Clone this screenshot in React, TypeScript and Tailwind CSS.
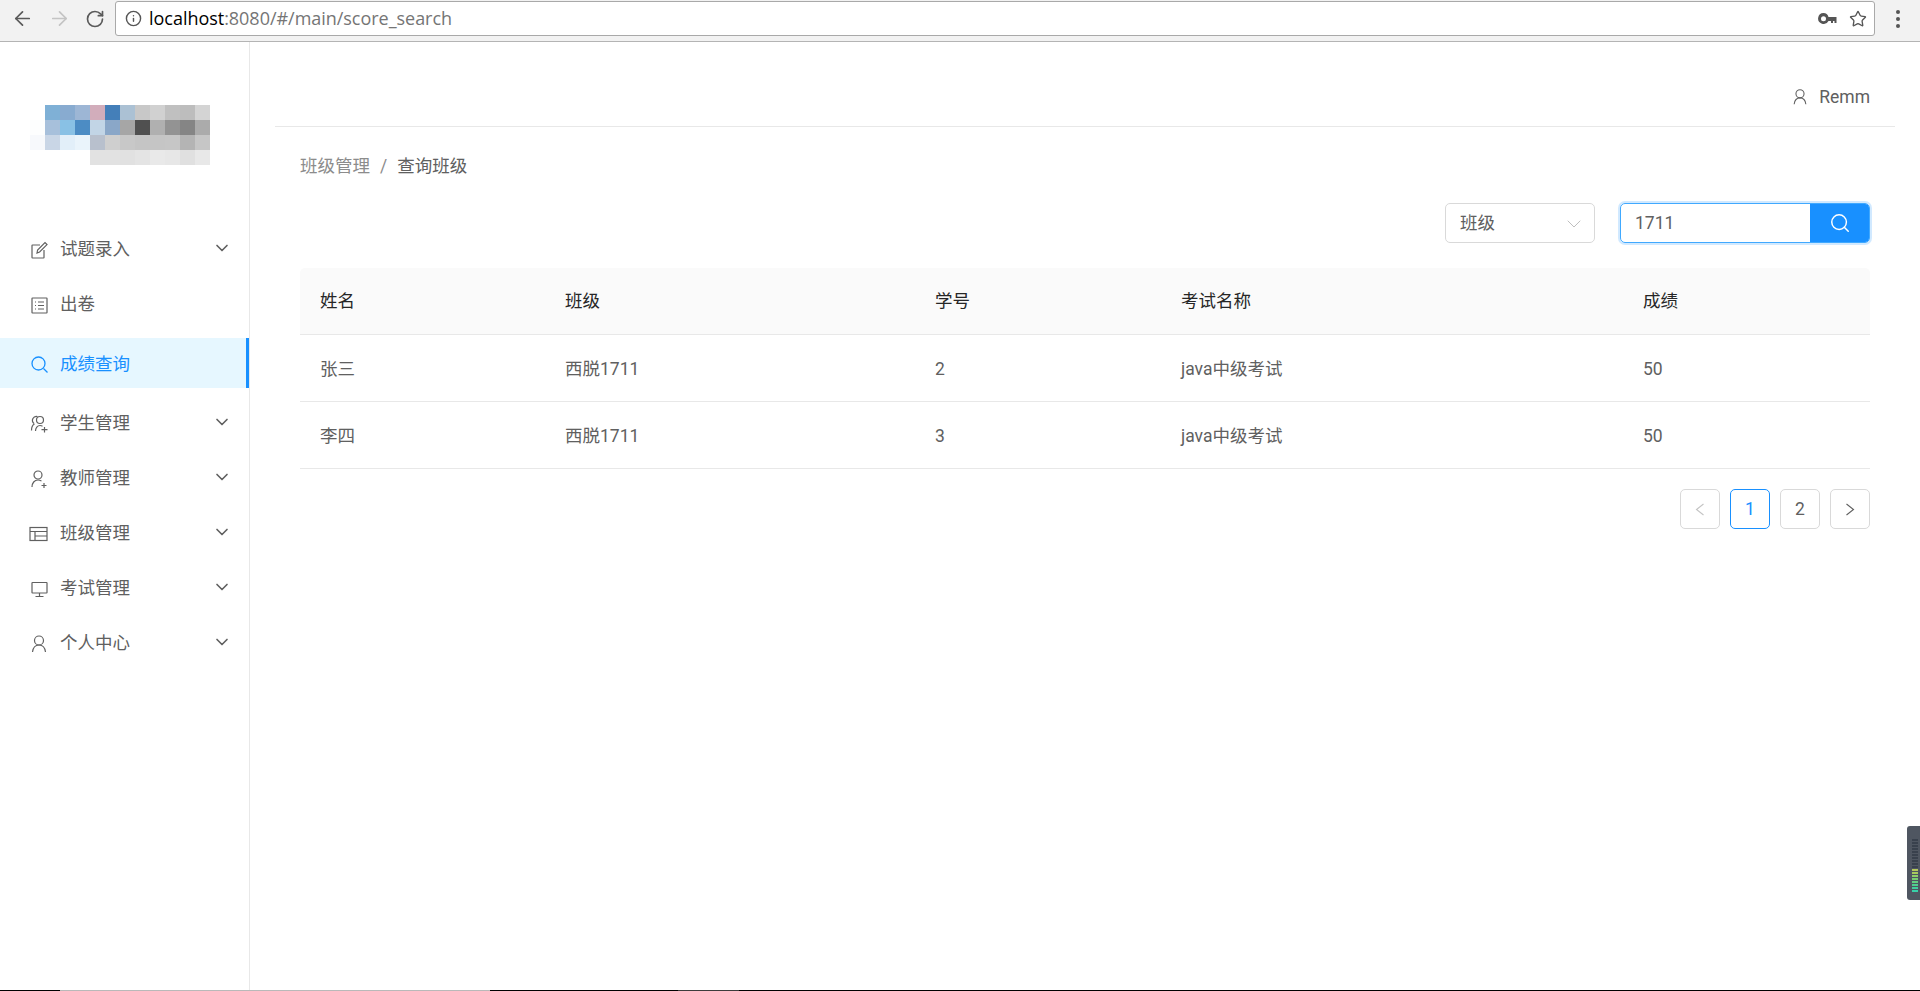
import { ArrowLeft, ArrowRight, ChevronDown, Info, RotateCw, Search, Star } from "lucide-react";
import type { ReactNode } from "react";

const font = "font-['Roboto','Noto_Sans_CJK_SC',sans-serif]";

const IconEdit = () => (
  <svg width="20" height="20" viewBox="0 0 20 20" fill="none" stroke="currentColor" strokeWidth="1.2">
    <path d="M15 10v7.500a.5.5 0 0 1-.5.5h-11a.5.5 0 0 1-.5-.5v-12a.5.5 0 0 1 .5-.5H11" />
    <path d="M8 13l.6-3L16 2.600 18 4.600 10.600 12z" />
  </svg>
);
const IconProfile = () => (
  <svg width="20" height="20" viewBox="0 0 20 20" fill="none" stroke="currentColor" strokeWidth="1.2">
    <rect x="3" y="3" width="15" height="15" rx="0.5" />
    <path d="M6 7h1M9 7h6M6 10.500h1M9 10.500h6M6 14h1M9 14h6" />
  </svg>
);
const IconSearch = () => (
  <svg width="20" height="20" viewBox="0 0 20 20" fill="none" stroke="currentColor" strokeWidth="1.3">
    <circle cx="9.500" cy="9.500" r="6.500" />
    <path d="M14.500 14.500l4 4" />
  </svg>
);
const IconTeam = () => (
  <svg width="20" height="20" viewBox="0 0 20 20" fill="none" stroke="currentColor" strokeWidth="1.2">
    <circle cx="11" cy="6" r="3.500" />
    <path d="M5 9.500A4 4 0 0 1 8.500 2.500M2.500 16.500c0-3 1-5.500 3-6.500M6.500 17c0-3 2-5.500 4.500-5.500 1 0 1.800.2 2.500.7M15.500 13v5.500M12.500 15.700h6" />
  </svg>
);
const IconUserAdd = () => (
  <svg width="20" height="20" viewBox="0 0 20 20" fill="none" stroke="currentColor" strokeWidth="1.2">
    <circle cx="9" cy="6" r="4" />
    <path d="M3 18c0-4 2.500-7 6-7 1.500 0 2.500.5 3.500 1M15 14v5M12.500 16.500h5" />
  </svg>
);
const IconTable = () => (
  <svg width="20" height="20" viewBox="0 0 20 20" fill="none" stroke="currentColor" strokeWidth="1.2">
    <rect x="1" y="3.500" width="17" height="13" />
    <path d="M1 7.500h17M6 7.500v9M6 12h12" />
  </svg>
);
const IconDesktop = () => (
  <svg width="20" height="20" viewBox="0 0 20 20" fill="none" stroke="currentColor" strokeWidth="1.2">
    <rect x="3" y="3.500" width="15" height="10.500" rx="0.5" />
    <path d="M10.500 14v3.500M6.500 17.500h8" />
  </svg>
);
const IconUser = ({ size = 20 }: { size?: number }) => (
  <svg width={size} height={size} viewBox="0 0 20 20" fill="none" stroke="currentColor" strokeWidth="1.2">
    <circle cx="10" cy="6.500" r="4.500" />
    <path d="M3.500 18c.5-4 3-7 6.500-7s6 3 6.500 7" />
  </svg>
);

const logoCells = [
  ["", "#7fb0d6", "#88abd0", "#9db6d5", "#d2adbb", "#447fb9", "#abc1d4", "#c8c8c8", "#d1d1d1", "#c0c0c0", "#bdbdbd", "#d4d4d4"],
  ["#fdfefe", "#a7c0db", "#89c1e5", "#4c8cc4", "#c2d5e6", "#8aa7c8", "#a6a6a6", "#505050", "#b0b0b0", "#939393", "#858585", "#ababab"],
  ["#f7f9fc", "#c9d6e6", "#e2eff9", "#eaf4fb", "#b8c0cd", "#cfcfcf", "#c8c8c8", "#c5c5c5", "#c5c5c5", "#c6c6c6", "#b4b4b4", "#c6c6c6"],
  ["", "", "", "", "#e2e2e2", "#e2e2e2", "#e1e1e1", "#e4e4e4", "#e9e9e9", "#e7e7e7", "#e0e0e0", "#e8e8e8"],
];

type MenuItem = { label: string; icon: ReactNode; arrow?: boolean; active?: boolean; h: string };

const menu: MenuItem[] = [
  { label: "试题录入", icon: <IconEdit />, arrow: true, h: "h-[55px]" },
  { label: "出卷", icon: <IconProfile />, h: "h-[55px]" },
  { label: "成绩查询", icon: <IconSearch />, active: true, h: "h-[50px] mt-[7px] mb-[7px]" },
  { label: "学生管理", icon: <IconTeam />, arrow: true, h: "h-[55px]" },
  { label: "教师管理", icon: <IconUserAdd />, arrow: true, h: "h-[55px]" },
  { label: "班级管理", icon: <IconTable />, arrow: true, h: "h-[55px]" },
  { label: "考试管理", icon: <IconDesktop />, arrow: true, h: "h-[55px]" },
  { label: "个人中心", icon: <IconUser />, arrow: true, h: "h-[55px]" },
];

const columns = [
  { label: "姓名", w: "w-[245px]" },
  { label: "班级", w: "w-[370px]" },
  { label: "学号", w: "w-[246px]" },
  { label: "考试名称", w: "w-[462px]" },
  { label: "成绩", w: "flex-1" },
];

const rows = [
  ["张三", "西脱1711", "2", "java中级考试", "50"],
  ["李四", "西脱1711", "3", "java中级考试", "50"],
];

const meter = [
  "#39414d", "#39414d", "#39414d", "#39414d", "#39414d", "#39414d", "#39414d", "#39414d", "#39414d", "#39414d",
  "#b5c95a", "#a8cc5e", "#8fd068", "#78d072", "#62d080", "#4fd08e", "#40d09c", "#38d0a8",
];

function BrowserBar() {
  return (
    <div className="h-[42px] shrink-0 flex items-center bg-[#f2f2f2] border-b border-[#b4b4b4] pb-[5px] pt-[1px]">
      <div className="w-[115px] flex items-center pl-[11px] gap-[14px] text-[#5a5a5a]">
        <ArrowLeft size={23} strokeWidth={1.8} />
        <ArrowRight size={23} strokeWidth={1.8} className="text-[#c4c4c4]" />
        <RotateCw size={20} strokeWidth={2} />
      </div>
      <div className="w-[1760px] h-[35px] bg-white border border-[#a9a9a9] rounded-[3px] flex items-center pl-[9px] pr-[7px]">
        <Info size={17} strokeWidth={2} className="text-[#555] mr-[7px]" />
        <span className="text-[18px] text-[#757575] font-['Open_Sans',sans-serif] tracking-[-0.03px]">
          <span className="text-black">localhost</span>:8080/#/main/score_search
        </span>
        <div className="ml-auto flex items-center gap-[12px] text-[#555]">
          <svg width="19" height="12" viewBox="0 0 19 12" fill="currentColor">
            <path d="M5.500 0a5.500 5.500 0 1 0 5 8H13v2h2V8h1.500v2H18.500V4H10.500a5.500 5.500 0 0 0-5-4zm0 3.200a2.500 2.500 0 1 1 0 5 2.500 2.500 0 0 1 0-5z" />
          </svg>
          <Star size={18} strokeWidth={1.8} />
        </div>
      </div>
      <div className="flex-1 flex flex-col items-center gap-[3px]">
        <span className="w-[4px] h-[4px] rounded-full bg-[#555]" />
        <span className="w-[4px] h-[4px] rounded-full bg-[#555]" />
        <span className="w-[4px] h-[4px] rounded-full bg-[#555]" />
      </div>
    </div>
  );
}

function Sidebar() {
  return (
    <aside className="w-[250px] shrink-0 border-r border-[#e8e8e8] flex flex-col">
      <div className="h-[179px] pt-[63px] pl-[30px] shrink-0">
        <div className="grid grid-cols-[repeat(12,15px)] grid-rows-[repeat(4,15px)]">
          {logoCells.flat().map((c, i) => (
            <div key={i} className="bg-[var(--c)]" style={{ ["--c" as string]: c || "transparent" }} />
          ))}
        </div>
      </div>
      <nav className="flex flex-col text-[17.5px] text-[#606060]">
        {menu.map((item) => (
          <div
            key={item.label}
            className={`${item.h} flex items-center pt-[2px] pl-[30px] pr-[17px] ${
              item.active ? "bg-[#e6f7ff] text-[#1890ff] border-r-[3px] border-[#1890ff]" : ""
            }`}
          >
            <span className="w-[20px] flex justify-center mr-[10px] -translate-x-[1px]">{item.icon}</span>
            <span>{item.label}</span>
            {item.arrow && <ChevronDown size={20} strokeWidth={2} className="ml-auto -translate-y-[2px]" />}
          </div>
        ))}
      </nav>
    </aside>
  );
}

function PageButton({ children, active, dim }: { children: ReactNode; active?: boolean; dim?: boolean }) {
  return (
    <div
      className={`w-[40px] h-[40px] rounded-[5px] border flex items-center justify-center text-[17.5px] ${
        active ? "border-[#1890ff] text-[#1890ff]" : dim ? "border-[#d9d9d9] text-[#c4c4c4]" : "border-[#d9d9d9] text-[#606060]"
      }`}
    >
      {children}
    </div>
  );
}

const PageArrow = ({ d }: { d: string }) => (
  <svg width="10" height="13" viewBox="0 0 10 13" fill="none" stroke="currentColor" strokeWidth="1.1">
    <path d={d} />
  </svg>
);

export default function App() {
  return (
    <div className={`h-[991px] flex flex-col relative overflow-hidden bg-white ${font}`}>
      <BrowserBar />
      <div className="flex-1 flex min-h-0">
        <Sidebar />
        <main className="flex-1 min-w-0 pl-[25px] pr-[25px]">
          <div className="h-[85px] border-b border-[#e8e8e8] flex items-center justify-end pr-[25px] pt-[26px] text-[17.5px] text-[#606060]">
            <IconUser size={18} />
            <span className="ml-[10px]">Remm</span>
          </div>
          <div className="px-[25px]">
            <div className="mt-[25px] h-[26px] pt-[2px] flex items-center text-[17.5px]">
              <span className="text-[#8c8c8c]">班级管理</span>
              <span className="mx-[10px] text-[#8c8c8c]">/</span>
              <span className="text-[#606060]">查询班级</span>
            </div>
            <div className="mt-[25px] flex justify-end items-center">
              <div className="w-[150px] h-[40px] border border-[#d9d9d9] rounded-[5px] flex items-center pl-[14px] pr-[8px] pt-[1px] text-[17.5px] text-[#606060]">
                班级
                <ChevronDown size={24} strokeWidth={1} className="ml-auto text-[#bfbfbf]" />
              </div>
              <div className="ml-[25px] w-[250px] h-[40px] flex rounded-[5px] border border-[#40a9ff] ring-2 ring-[#1890ff]/20 overflow-hidden text-[17.5px] text-[#606060]">
                <div className="flex-1 flex items-center pl-[14px] pt-[1px]">1711</div>
                <div className="w-[59px] bg-[#1890ff] flex items-center justify-center text-white">
                  <Search size={22} strokeWidth={1.6} />
                </div>
              </div>
            </div>
            <div className="mt-[25px] text-[17.5px]">
              <div className="h-[67px] flex items-center pt-[1px] bg-[#fafafa] border-b border-[#e8e8e8] rounded-t-[5px] text-[#262626]">
                {columns.map((c) => (
                  <div key={c.label} className={`${c.w} pl-[20px]`}>
                    {c.label}
                  </div>
                ))}
              </div>
              {rows.map((r) => (
                <div key={r[0]} className="h-[67px] flex items-center pt-[2px] border-b border-[#e8e8e8] text-[#606060]">
                  {r.map((v, i) => (
                    <div key={i} className={`${columns[i].w} pl-[20px]`}>
                      {v}
                    </div>
                  ))}
                </div>
              ))}
            </div>
            <div className="mt-[20px] flex justify-end gap-[10px]">
              <PageButton dim>
                <PageArrow d="M8.500 1 1.500 6.500l7 5.500" />
              </PageButton>
              <PageButton active>1</PageButton>
              <PageButton>2</PageButton>
              <PageButton>
                <PageArrow d="M1.500 1l7 5.500-7 5.500" />
              </PageButton>
            </div>
          </div>
        </main>
      </div>
      <div className="absolute right-0 top-[826px] w-[13px] h-[74px] rounded-l-[3px] bg-[#4f5661] flex flex-col justify-end gap-[1px] pl-[5px] pr-[2px] pb-[8px]">
        {meter.map((c, i) => (
          <div key={i} className="h-[2px] bg-[var(--c)]" style={{ ["--c" as string]: c }} />
        ))}
      </div>
      <div className="absolute left-0 right-0 bottom-0 h-[1px] flex">
        <div className="w-[60px] bg-black" />
        <div className="w-[430px] bg-[#b9b9b9]" />
        <div className="w-[188px] bg-black" />
        <div className="w-[61px] bg-[#3c3c3c]" />
        <div className="flex-1 bg-black" />
      </div>
    </div>
  );
}
